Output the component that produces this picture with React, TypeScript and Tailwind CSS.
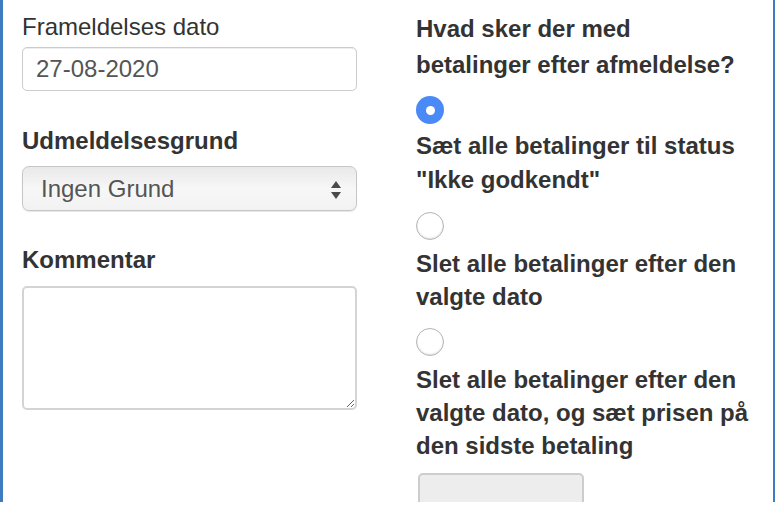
import { useState } from 'react';

const options = [
  { id: 'reject', gap: 'mt-[13px]', textGap: 'mt-[5px] leading-[34px]', lines: ['Sæt alle betalinger til status', '"Ikke godkendt"'] },
  { id: 'delete', gap: 'mt-[15px]', textGap: 'mt-[-2px] leading-[33px]', lines: ['Slet alle betalinger efter den', 'valgte dato'] },
  {
    id: 'delete-price',
    gap: 'mt-[15px]',
    textGap: 'mt-[-2px] leading-[33px]',
    lines: ['Slet alle betalinger efter den', 'valgte dato, og sæt prisen på', 'den sidste betaling'],
  },
];

function Radio({ checked, onClick }: { checked: boolean; onClick: () => void }) {
  if (checked) {
    return (
      <button
        type="button"
        onClick={onClick}
        className="flex h-[28px] w-[28px] items-center justify-center rounded-full bg-[#4a8af6]"
      >
        <span className="h-[9px] w-[9px] rounded-full bg-white" />
      </button>
    );
  }
  return (
    <button
      type="button"
      onClick={onClick}
      className="h-[28px] w-[28px] rounded-full border border-[#b4b4b4] bg-white shadow-[inset_0_-1px_2px_rgba(0,0,0,0.12)]"
    />
  );
}

export default function App() {
  const [choice, setChoice] = useState('reject');
  const [date, setDate] = useState('27-08-2020');

  return (
    <div className="h-[516px] w-[784px] bg-white font-['Liberation_Sans',Arial,sans-serif] text-[24px] text-[#333]">
      <div className="flex h-[502px] w-[775px] overflow-hidden border-l-[3px] border-r-2 border-[#3f7bc1]">
        {/* left column */}
        <div className="w-[354px] shrink-0 pl-[19px] pt-[10px]">
          <label className="block leading-[34px]">Frameldelses dato</label>
          <input
            value={date}
            onChange={(e) => setDate(e.target.value)}
            className="mt-[3px] block h-[44px] w-[335px] rounded-[5px] border border-[#ccc] px-[13px] text-[24px] text-[#555] shadow-[inset_0_1px_1px_rgba(0,0,0,0.075)] outline-none"
          />

          <label className="mt-[33px] block font-bold leading-[34px]">Udmeldelsesgrund</label>
          <div className="relative mt-[8px] flex h-[45px] w-[335px] items-center rounded-[7px] border border-[#c6c6c6] bg-gradient-to-b from-[#e9e9e9] via-[#f7f7f7] to-[#f2f2f2] pl-[18px] text-[#555] shadow-[0_1px_1px_rgba(0,0,0,0.1)]">
            <span className="leading-none">Ingen Grund</span>
            <svg className="absolute right-[14px] top-[13px]" width="12" height="20" viewBox="0 0 12 20">
              <path d="M6 1 L11 8 L1 8 Z" fill="#4a4a4a" />
              <path d="M6 19 L11 12 L1 12 Z" fill="#4a4a4a" />
            </svg>
          </div>

          <label className="mt-[32px] block font-bold leading-[34px]">Kommentar</label>
          <textarea className="mt-[9px] block h-[124px] w-[335px] rounded-[5px] border-2 border-[#d4d4d4] px-3 py-2 text-[20px] outline-none" />
        </div>

        {/* right column */}
        <div className="ml-[59px] flex-1 pt-[11px] font-bold">
          <p className="leading-[36px]">
            Hvad sker der med
            <br />
            betalinger efter afmeldelse?
          </p>

          {options.map((opt) => (
            <div key={opt.id} className={opt.gap}>
              <Radio checked={choice === opt.id} onClick={() => setChoice(opt.id)} />
              <p className={opt.textGap}>
                {opt.lines.map((line, j) => (
                  <span key={j} className="block whitespace-nowrap">
                    {line}
                  </span>
                ))}
              </p>
            </div>
          ))}

          <input
            disabled
            className="ml-[2px] mt-[11px] block h-[44px] w-[166px] rounded-[5px] border-2 border-[#cdcdcd] bg-[#ededed]"
          />
        </div>
      </div>
    </div>
  );
}
